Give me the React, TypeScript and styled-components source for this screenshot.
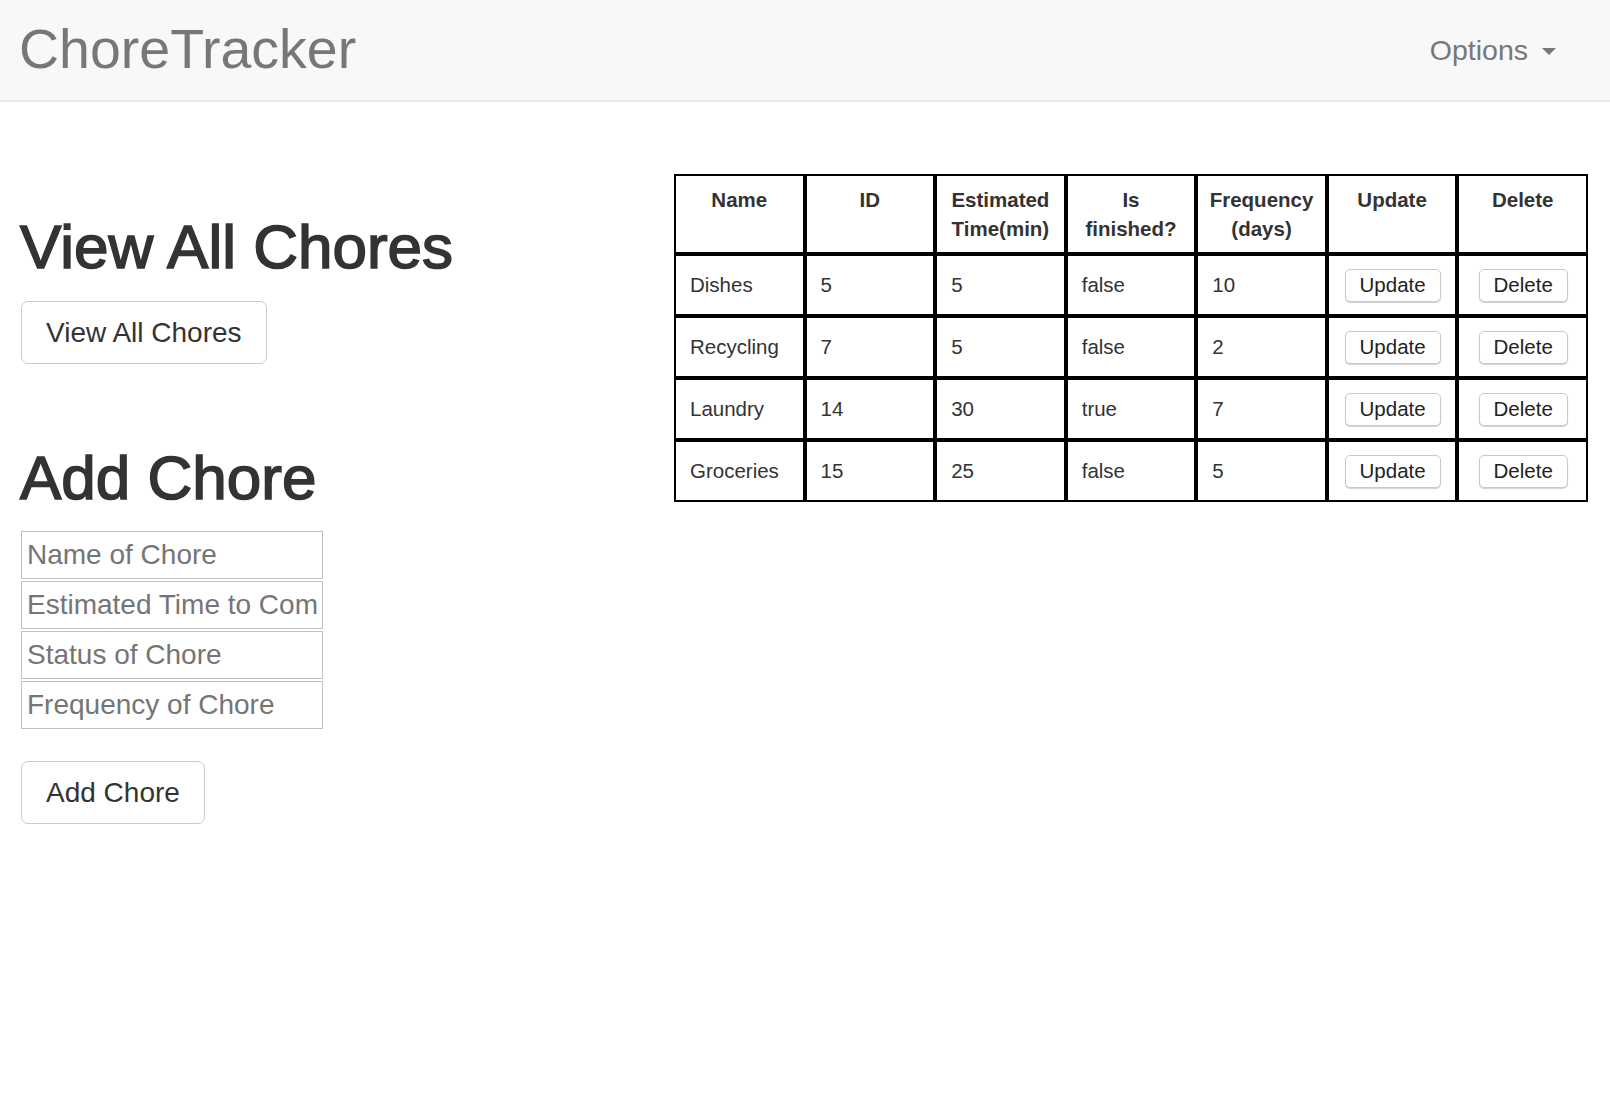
import React from "react";
import styled, { createGlobalStyle } from "styled-components";

const GlobalStyle = createGlobalStyle`
  html, body { margin: 0; padding: 0; background: #fff; }
  body {
    font-family: "Liberation Sans", Arial, Helvetica, sans-serif;
    color: #333;
  }
  * { box-sizing: border-box; }
`;

const Navbar = styled.header`
  height: 102px;
  background: #f8f8f8;
  border-bottom: 2px solid #e7e7e7;
  display: flex;
  align-items: center;
  justify-content: space-between;
  padding: 0 54px 0 19px;
`;

const Brand = styled.a`
  font-size: 55.5px;
  line-height: 1;
  color: #777;
  text-decoration: none;
`;

const Dropdown = styled.a`
  display: flex;
  align-items: center;
  gap: 14px;
  font-size: 28.5px;
  line-height: 1;
  color: #777;
  text-decoration: none;
`;

const Caret = styled.span`
  display: inline-block;
  width: 0;
  height: 0;
  margin-top: 3px;
  border-top: 7px solid #777;
  border-left: 7.5px solid transparent;
  border-right: 7.5px solid transparent;
`;

const Main = styled.main`
  display: flex;
  align-items: flex-start;
  padding: 72px 22px 0 21px;
`;

const LeftColumn = styled.section`
  width: 653px;
  flex: none;
  padding-top: 39px;
  display: flex;
  flex-direction: column;
  align-items: flex-start;
`;

const Heading = styled.h1<{ $gap?: number }>`
  margin: ${(p) => p.$gap ?? 0}px 0 0 -1px;
  font-size: 62px;
  line-height: 67px;
  font-weight: 400;
  color: #333;
  -webkit-text-stroke: 1.6px #333;
`;

const BigButton = styled.button<{ $gap: number }>`
  margin-top: ${(p) => p.$gap}px;
  height: 63px;
  padding: 0 24px;
  font-family: inherit;
  font-size: 28px;
  color: #333;
  background: #fff;
  border: 1px solid #ccc;
  border-radius: 7px;
  cursor: pointer;
`;

const InputStack = styled.div`
  margin-top: 20px;
  display: flex;
  flex-direction: column;
  gap: 2px;
`;

const TextInput = styled.input`
  width: 302px;
  height: 48px;
  padding: 0 5px;
  font-family: inherit;
  font-size: 28px;
  color: #333;
  border: 1px solid #bfbfbf;
  border-radius: 0;
  outline: none;
  &::placeholder { color: #757575; }
`;

const Table = styled.table`
  width: 914px;
  table-layout: fixed;
  border-collapse: separate;
  border-spacing: 0;
  font-size: 20.5px;
  color: #333;
`;

const Col = styled.col`
  width: 130.57px;
`;

const HeadRow = styled.tr`
  height: 79px;
`;

const BodyRow = styled.tr`
  height: 62px;
`;

const Th = styled.th`
  border: 2px solid #000;
  padding: 10px 8px 9px;
  font-weight: 700;
  line-height: 28.5px;
  text-align: center;
  vertical-align: top;
`;

const Td = styled.td<{ $center?: boolean }>`
  border: 2px solid #000;
  padding: 0 13px 0 14px;
  line-height: 28px;
  vertical-align: middle;
  text-align: ${(p) => (p.$center ? "center" : "left")};
`;

const CellButton = styled.button`
  height: 33px;
  padding: 0 14px;
  font-family: inherit;
  font-size: 20.5px;
  color: #222;
  background: #fff;
  border: 1px solid #c9c9c9;
  border-radius: 5px;
  box-shadow: 0 1px 1px rgba(0, 0, 0, 0.18);
  vertical-align: middle;
  cursor: pointer;
`;

type Chore = { name: string; id: number; time: number; finished: boolean; freq: number };

const chores: Chore[] = [
  { name: "Dishes", id: 5, time: 5, finished: false, freq: 10 },
  { name: "Recycling", id: 7, time: 5, finished: false, freq: 2 },
  { name: "Laundry", id: 14, time: 30, finished: true, freq: 7 },
  { name: "Groceries", id: 15, time: 25, finished: false, freq: 5 },
];

const headers = ["Name", "ID", "Estimated Time(min)", "Is finished?", "Frequency (days)", "Update", "Delete"];

export default function App() {
  return (
    <>
      <GlobalStyle />
      <Navbar>
        <Brand href="#">ChoreTracker</Brand>
        <Dropdown href="#">
          Options
          <Caret />
        </Dropdown>
      </Navbar>
      <Main>
        <LeftColumn>
          <Heading>View All Chores</Heading>
          <BigButton $gap={21}>View All Chores</BigButton>
          <Heading $gap={80}>Add Chore</Heading>
          <InputStack>
            <TextInput placeholder="Name of Chore" />
            <TextInput placeholder="Estimated Time to Complete" />
            <TextInput placeholder="Status of Chore" />
            <TextInput placeholder="Frequency of Chore" />
          </InputStack>
          <BigButton $gap={32}>Add Chore</BigButton>
        </LeftColumn>
        <Table>
          <colgroup>
            {headers.map((h) => (
              <Col key={h} />
            ))}
          </colgroup>
          <thead>
            <HeadRow>
              {headers.map((h) => (
                <Th key={h}>{h}</Th>
              ))}
            </HeadRow>
          </thead>
          <tbody>
            {chores.map((c) => (
              <BodyRow key={c.id}>
                <Td>{c.name}</Td>
                <Td>{c.id}</Td>
                <Td>{c.time}</Td>
                <Td>{String(c.finished)}</Td>
                <Td>{c.freq}</Td>
                <Td $center>
                  <CellButton>Update</CellButton>
                </Td>
                <Td $center>
                  <CellButton>Delete</CellButton>
                </Td>
              </BodyRow>
            ))}
          </tbody>
        </Table>
      </Main>
    </>
  );
}
